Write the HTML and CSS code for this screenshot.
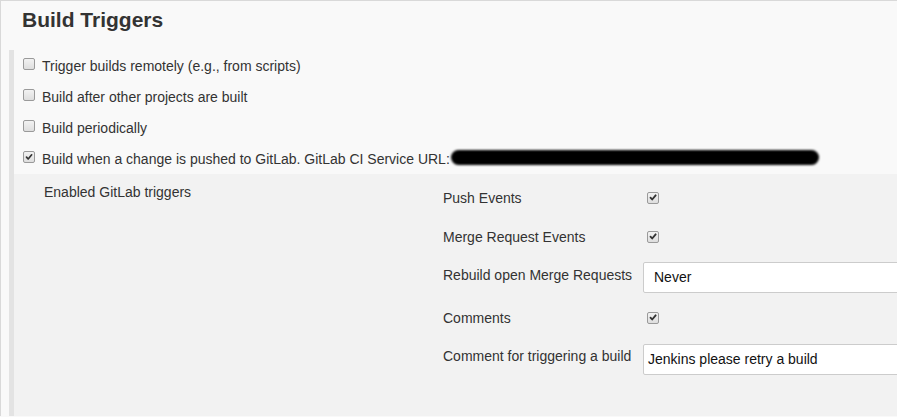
FILE: index.html
```html
<!DOCTYPE html>
<html>
<head>
<meta charset="utf-8">
<link rel="stylesheet" href="styles.css">
</head>
<body>
<div class="page">
  <h2 class="title">Build Triggers</h2>
  <div class="section">
    <div class="opt"><span class="cb"></span><span>Trigger builds remotely (e.g., from scripts)</span></div>
    <div class="opt"><span class="cb"></span><span>Build after other projects are built</span></div>
    <div class="opt"><span class="cb"></span><span>Build periodically</span></div>
    <div class="opt"><span class="cb checked"><svg viewBox="0 0 12 12" width="12" height="12"><path d="M3 6.2 L5 8.4 L9.2 3.4" fill="none" stroke="#333" stroke-width="2" stroke-linecap="round" stroke-linejoin="round"/></svg></span><span>Build when a change is pushed to GitLab. GitLab CI Service URL:</span><span class="redact"></span></div>
    <div class="panel">
      <div class="panel-label">Enabled GitLab triggers</div>
      <div class="fields">
        <div class="field"><div class="flabel">Push Events</div><div class="fctl"><span class="cb small checked"><svg viewBox="0 0 12 12" width="11" height="11"><path d="M3 6.2 L5 8.4 L9.2 3.4" fill="none" stroke="#333" stroke-width="2.2" stroke-linecap="round" stroke-linejoin="round"/></svg></span></div></div>
        <div class="field"><div class="flabel">Merge Request Events</div><div class="fctl"><span class="cb small checked"><svg viewBox="0 0 12 12" width="11" height="11"><path d="M3 6.2 L5 8.4 L9.2 3.4" fill="none" stroke="#333" stroke-width="2.2" stroke-linecap="round" stroke-linejoin="round"/></svg></span></div></div>
        <div class="field top"><div class="flabel">Rebuild open Merge Requests</div><div class="fctl"><div class="select">Never</div></div></div>
        <div class="field gap-more"><div class="flabel">Comments</div><div class="fctl"><span class="cb small checked"><svg viewBox="0 0 12 12" width="11" height="11"><path d="M3 6.2 L5 8.4 L9.2 3.4" fill="none" stroke="#333" stroke-width="2.2" stroke-linecap="round" stroke-linejoin="round"/></svg></span></div></div>
        <div class="field top last"><div class="flabel">Comment for triggering a build</div><div class="fctl"><div class="textbox">Jenkins please retry a build</div></div></div>
      </div>
    </div>
  </div>
</div>
</body>
</html>
```

FILE: styles.css
```css
html, body {
  margin: 0;
  padding: 0;
  overflow: hidden;
  height: 417px;
}
body {
  background: #f9f9f9;
  font-family: "Liberation Sans", Arial, sans-serif;
  font-size: 14px;
  color: #333;
}
.page {
  border-top: 1px solid #d9d9d9;
  border-left: 1px solid #d9d9d9;
  height: 416px;
  box-sizing: border-box;
  overflow: hidden;
}
.title {
  margin: 0;
  padding: 7px 0 0 21px;
  height: 42px;
  font-size: 21px;
  font-weight: bold;
  line-height: 24px;
  color: #333;
}
.section {
  margin-left: 8px;
  border-left: 5px solid #e3e3e3;
  height: 400px;
}
.opt {
  height: 31px;
  display: flex;
  align-items: center;
  padding-left: 9px;
  white-space: nowrap;
}
.cb {
  display: inline-flex;
  align-items: center;
  justify-content: center;
  width: 10px;
  height: 10px;
  border: 1px solid #9a9a9a;
  border-radius: 2px;
  background: linear-gradient(#f2f2f2, #dedede);
  margin-right: 7px;
  margin-top: -3px;
  flex: none;
}
.cb svg {
  display: block;
}
.cb.small {
  margin: 0 0 0 4px;
}
.redact {
  display: inline-block;
  width: 368px;
  height: 15px;
  background: #000;
  border-radius: 8px;
  filter: blur(1px);
  margin-left: 1px;
  margin-top: -2px;
}
.panel {
  background: #f2f2f2;
  display: grid;
  grid-template-columns: 399px 1fr;
  padding: 8px 0 60px 30px;
}
.panel-label {
  line-height: 17px;
  padding-top: 2px;
}
.fields {
  display: flex;
  flex-direction: column;
  gap: 8px;
}
.field {
  display: grid;
  grid-template-columns: 200px 1fr;
  align-items: center;
  height: 31px;
  white-space: nowrap;
}
.field.top .flabel {
  align-self: start;
  padding-top: 7px;
}
.field.gap-more {
  margin-top: 3px;
}
.field.last {
  margin-top: 3px;
}
.field.last .flabel {
  padding-top: 4px;
}
.fctl {
  display: flex;
  align-items: center;
}
.select, .textbox {
  box-sizing: border-box;
  width: 300px;
  height: 31px;
  background: #fff;
  border: 1px solid #cccccc;
  border-radius: 2px;
  color: #111;
  font-size: 14px;
  line-height: 29px;
}
.select {
  padding-left: 10px;
  margin-top: 2px;
}
.textbox {
  padding-left: 4px;
}
```
